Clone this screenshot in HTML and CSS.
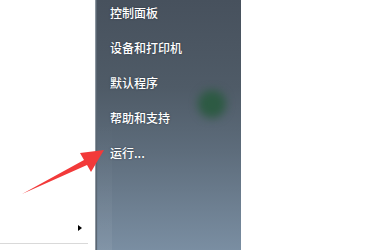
FILE: index.html
```html
<!DOCTYPE html>
<html lang="zh-CN">
<head>
<meta charset="utf-8">
<link rel="stylesheet" href="styles.css">
</head>
<body>
<div class="screen">
  <div class="left-pane">
    <div class="left-spacer"></div>
    <div class="all-programs"><span class="tri"></span></div>
    <div class="sep"></div>
  </div>
  <div class="right-pane">
    <div class="glow"></div>
    <ul class="menu">
      <li>控制面板</li>
      <li>设备和打印机</li>
      <li>默认程序</li>
      <li>帮助和支持</li>
      <li>运行...</li>
    </ul>
  </div>
  <div class="desktop"></div>
  <svg class="arrow" width="387" height="250" viewBox="0 0 387 250">
    <polygon points="22,194 84,160 80,153 104,150 91,172 87,165" fill="#f23a3a"/>
  </svg>
</div>
</body>
</html>
```
FILE: styles.css
```css
html, body {
  margin: 0;
  padding: 0;
  background: #ffffff;
}
.screen {
  position: relative;
  width: 387px;
  height: 250px;
  display: flex;
  overflow: hidden;
  font-family: "Noto Sans CJK SC", "Noto Sans", sans-serif;
}
.left-pane {
  width: 95px;
  background: #ffffff;
  display: flex;
  flex-direction: column;
}
.left-spacer {
  flex: 1;
}
.all-programs {
  height: 14px;
  display: flex;
  justify-content: flex-end;
  align-items: center;
  padding-right: 13px;
  margin-bottom: 8px;
}
.tri {
  width: 0;
  height: 0;
  border-top: 3.5px solid transparent;
  border-bottom: 3.5px solid transparent;
  border-left: 4px solid #000000;
}
.sep {
  width: 88px;
  height: 1px;
  background: #d9d9d9;
  margin-bottom: 6px;
}
.right-pane {
  position: relative;
  width: 146px;
  background: linear-gradient(to bottom, #47515d 0%, #4f5b67 35%, #5d6c7b 60%, #7a8ea2 100%);
  box-shadow: inset 1px 0 0 #8a949e, inset 2px 0 0 #5a6672;
}
.right-pane::before {
  content: "";
  position: absolute;
  left: 3px;
  top: 120px;
  width: 14px;
  height: 130px;
  background: linear-gradient(to bottom, rgba(255,255,255,0), rgba(255,255,255,0.06));
}
.glow {
  position: absolute;
  left: 103px;
  top: 90px;
  width: 28px;
  height: 28px;
  border-radius: 50%;
  background: #2d5a43;
  filter: blur(4px);
}
.menu {
  position: relative;
  list-style: none;
  margin: 0;
  padding: 5px 0 0 15px;
  display: flex;
  flex-direction: column;
  gap: 19px;
}
.menu li {
  height: 16px;
  line-height: 16px;
  font-size: 12px;
  font-weight: 500;
  color: #ffffff;
  text-shadow: 0 0 2px rgba(20, 30, 40, 0.6);
}
.desktop {
  flex: 1;
  background: #ffffff;
}
.arrow {
  position: absolute;
  left: 0;
  top: 0;
  pointer-events: none;
}
```
